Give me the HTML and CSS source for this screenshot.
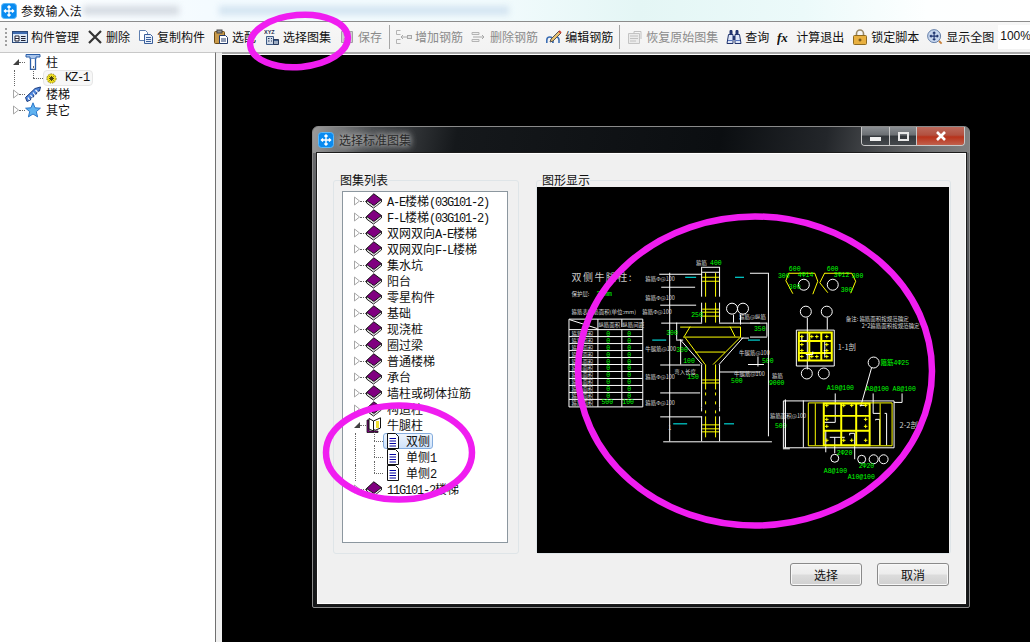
FILE: index.html
```html
<!DOCTYPE html>
<html lang="zh-CN">
<head>
<meta charset="utf-8">
<title>参数输入法</title>
<link rel="stylesheet" href="styles.css">
</head>
<body>
<svg class="defs" aria-hidden="true">
  <symbol id="app" viewBox="0 0 16 16"><rect x=".5" y=".5" width="15" height="15" rx="3" fill="#0a8bf0" stroke="#5ab8f8"/><path d="M8 3v10M4 8h9M6.4 4.6 8 3l1.6 1.6M6.4 11.4 8 13l1.6-1.6M5 6.4 3.4 8 5 9.6M11 6.4 12.6 8 11 9.6" fill="none" stroke="#fff" stroke-width="1.4"/></symbol>
  <symbol id="i-manage" viewBox="0 0 16 16"><rect x=".5" y="2.5" width="15" height="11" fill="#dce9f7" stroke="#2d4a78"/><rect x="1" y="3" width="14" height="2" fill="#3f6cb0"/><path d="M3 7h4v5H3zM3 9.5h4M9 7.5h4.500M9 9.500h4.500M9 11.500h4.500" fill="#fff" stroke="#223"/></symbol>
  <symbol id="i-x" viewBox="0 0 16 16"><path d="M2 2 14 14M14 2 2 14" stroke="#333" stroke-width="2.200" fill="none"/></symbol>
  <symbol id="i-copy" viewBox="0 0 16 16"><path d="M1.500 1.500h6l2 2v8h-8z" fill="#fff" stroke="#5f7fb0"/><path d="M6.500 5.500h6l2 2v7h-8z" fill="#e8f0fb" stroke="#3b5f9a"/><path d="M8 8.500h5M8 10.500h5M8 12.500h5" stroke="#3b5f9a"/></symbol>
  <symbol id="i-paste" viewBox="0 0 16 16"><rect x="1.500" y="2.500" width="10" height="12" rx="1" fill="#c99a4a" stroke="#6b4b15"/><rect x="4" y="1" width="5" height="3" fill="#8e8e8e" stroke="#444"/><path d="M6.500 6.500h6l2 2v6h-8z" fill="#fff" stroke="#223a6a"/><path d="M8 10h5M8 12h5" stroke="#223a6a"/></symbol>
  <symbol id="i-save" viewBox="0 0 16 16"><path d="M2.500 2.500h11v11h-11z" fill="#cfcfcf" stroke="#a2a2a2"/><path d="M5 2.500h6v4H5zM5 9.500h6v4H5z" fill="#efefef" stroke="#b0b0b0"/></symbol>
  <symbol id="i-add" viewBox="0 0 16 16"><path d="M4.500 1.500H.5v4h4M4.500 10.500H.5v4h4" fill="none" stroke="#b4b4b4"/><path d="M5 8h6M7 6 5 8l2 2" fill="none" stroke="#a8a8a8"/><rect x="11.500" y="6.500" width="4" height="3" fill="#e4e4e4" stroke="#a8a8a8"/></symbol>
  <symbol id="i-del" viewBox="0 0 16 16"><path d="M1 3.500h7v2H1zM1 10.500h7v2H1z" fill="#eee" stroke="#b4b4b4"/><path d="M2 8h11M11 6l2 2-2 2" fill="none" stroke="#a8a8a8"/></symbol>
  <symbol id="i-edit" viewBox="0 0 16 16"><path d="M.8 14v-3q0-3 3-3t3 3v3M7 14v-3q0-3 3-3t3 3v3" fill="none" stroke="#3c6eb4" stroke-width="1.600"/><path d="M5 10 13 2l2 2-8 8-3 1z" fill="#e8c070" stroke="#555"/><path d="M13 2l2 2" stroke="#d04030" stroke-width="1.800"/></symbol>
  <symbol id="i-restore" viewBox="0 0 16 16"><path d="M1.500 4.500h11v10h-11z" fill="#ebebeb" stroke="#c4c4c4"/><path d="M3 7h8M3 9.500h8M3 12h6M7 5V2.500h7V10" fill="none" stroke="#c0c0c0"/></symbol>
  <symbol id="i-binoc" viewBox="0 0 16 16"><path d="M4 1.500h2v4H4zM10 1.500h2v4h-2z" fill="#23356e" stroke="#23356e"/><path d="M2.500 5.500h4.500v9H1z M9 5.500h4.500L15 14.500H9z" fill="#dfe7f7" stroke="#23356e"/><path d="M7 7h2v4H7z" fill="#23356e"/><path d="M2 11.500h4.500M9.500 11.500H14" stroke="#5a78c0"/></symbol>
  <symbol id="i-lock" viewBox="0 0 16 16"><path d="M4.500 7V4.500a3.500 3.500 0 0 1 7 0V7" fill="none" stroke="#9a8a68" stroke-width="1.600"/><rect x="1.500" y="6.500" width="13" height="9" rx="1" fill="#e8b040" stroke="#8e6a20"/><path d="M8 9.500v3M6.500 11h3" stroke="#5a4010"/></symbol>
  <symbol id="i-zoom" viewBox="0 0 18 18"><circle cx="8" cy="8" r="7.300" fill="#c6d6ee" stroke="#55719e"/><path d="M8 3.500v9M3.500 8h9M6.500 5 8 3.500 9.500 5M6.500 11 8 12.500 9.500 11M5 6.500 3.500 8 5 9.500M11 6.500 12.500 8 11 9.500" fill="none" stroke="#1f3570" stroke-width="1.200"/><path d="m13.500 13.500 3 3" stroke="#c8803a" stroke-width="2"/></symbol>
  <symbol id="t-col" viewBox="0 0 16 16"><path d="M1 .5h14v2.500H11v2h-6V3H1z" fill="#a8c4ea" stroke="#2a5ea8"/><path d="M5.500 5v10.500h5V5" fill="#fff" stroke="#2a5ea8" stroke-width="1.300"/></symbol>
  <symbol id="t-stair" viewBox="0 0 16 16"><path d="M.5 11.500 10 2.500l5.500-1.500-1 4-2.500.5-.5 2.500-2.500.5-.5 2.500-2.500.5-.5 2.500L2 15.500z" fill="#4f86dc" stroke="#1e3f80"/><path d="M3 11.500l1.500 2.500M5.500 9l2 2.500M8 6.500l2 2.500M10.500 4l2 2" stroke="#fff" stroke-width="1.200"/></symbol>
  <symbol id="t-star" viewBox="0 0 16 16"><path d="m8 .8 2 5 5.400.4-4.100 3.400 1.300 5.300L8 12l-4.600 2.900 1.300-5.300L.6 6.200 6 5.800z" fill="#5fb2f0" stroke="#2a76c8"/></symbol>
  <symbol id="t-gear" viewBox="0 0 11 11"><circle cx="5.500" cy="5.500" r="4.600" fill="#f0e020" stroke="#8a7a10" stroke-dasharray="1.500 1"/><path d="M3 5.500h5M5.500 3v5M3.500 3.500l4 4M7.500 3.500l-4 4" stroke="#4a4410"/></symbol>
  <symbol id="book" viewBox="0 0 16 16"><path d="M.6 7.500v2.500L7.500 15l7.900-6V6.500z" fill="#fff" stroke="#111"/><path d="M.6 7.500 7.800 .8l7.600 5.700-7.500 6z" fill="#800080" stroke="#111"/><path d="M8.500 13.800l6-4.500M8 13.500 1.500 9" stroke="#aaa" stroke-width=".7"/></symbol>
  <symbol id="book-open" viewBox="0 0 16 16"><path d="M1 3h2v11h9v1.500H1z" fill="#800080" stroke="#111" stroke-width=".8"/><path d="M3 1.500 7.500 4v10L3 12z" fill="#fff" stroke="#111"/><path d="M7.500 4 14.500.8V11l-7 3z" fill="#fff" stroke="#111"/><path d="M10 4h3v7h-3z" fill="#f0e030"/></symbol>
  <symbol id="page" viewBox="0 0 12 16"><path d="M.5.500h8l3 3v12H.5z" fill="#fff" stroke="#111"/><path d="M2.500 5.500H9M2.500 8H9M2.500 10.500H9M2.500 13H9" stroke="#0000a0"/></symbol>
  <symbol id="tri" viewBox="0 0 6 10"><path d="M.5 1v8l5-4z" fill="#fff" stroke="#a6a6a6"/></symbol>
  <symbol id="tri-open" viewBox="0 0 6 10"><path d="M6 2v6H0z" fill="#404040"/></symbol>
  <symbol id="plus" viewBox="0 0 4 4"><path d="M2 0v4M0 2h4" stroke="#ff0" stroke-width="1"/></symbol>
</svg>

<header class="appbar">
  <svg class="app-ic"><use href="#app"/></svg>
  <span class="app-name">参数输入法</span>
  <span class="blob b1"></span><span class="blob b3"></span>
</header>

<nav class="toolbar">
  <span class="grip"></span>
  <div class="tool"><svg class="ti"><use href="#i-manage"/></svg><span>构件管理</span></div>
  <div class="tool"><svg class="ti"><use href="#i-x"/></svg><span>删除</span></div>
  <div class="tool"><svg class="ti"><use href="#i-copy"/></svg><span>复制构件</span></div>
  <div class="tool"><svg class="ti"><use href="#i-paste"/></svg><span>选配</span></div>
  <div class="tool"><svg class="ti" viewBox="0 0 16 16"><text x="0" y="5" class="mini">XYZ</text><path d="M2.500 7.500h7v8h-7z" fill="#cfd8e6" stroke="#3c5a86"/><path d="M9.500 10.500h5v5h-5z" fill="#3c5a86" stroke="#26395c"/><path d="M4 9.500h1.500M7 9.500h1M4 12h1.500M7 12h1" stroke="#26395c"/><path d="M11 12v3M13 12v3" stroke="#fff"/></svg><span>选择图集</span></div>
  <div class="tool off"><svg class="ti"><use href="#i-save"/></svg><span>保存</span></div>
  <i class="sep s1"></i>
  <div class="tool off"><svg class="ti"><use href="#i-add"/></svg><span>增加钢筋</span></div>
  <div class="tool off"><svg class="ti"><use href="#i-del"/></svg><span>删除钢筋</span></div>
  <div class="tool"><svg class="ti"><use href="#i-edit"/></svg><span>编辑钢筋</span></div>
  <i class="sep s2"></i>
  <div class="tool off"><svg class="ti"><use href="#i-restore"/></svg><span>恢复原始图集</span></div>
  <div class="tool"><svg class="ti"><use href="#i-binoc"/></svg><span>查询</span></div>
  <div class="tool"><svg class="ti" viewBox="0 0 16 16"><text x="0" y="13" class="fx">fx</text></svg><span>计算退出</span></div>
  <div class="tool"><svg class="ti"><use href="#i-lock"/></svg><span>锁定脚本</span></div>
  <div class="tool"><svg class="ti"><use href="#i-zoom"/></svg><span>显示全图</span></div>
  <div class="zoombox">100%</div>
</nav>

<main class="main">
  <aside class="panel">
    <div class="row"><svg class="tw"><use href="#tri-open"/></svg><i class="dots"></i><svg class="ic"><use href="#t-col"/></svg><span>柱</span></div>
    <div class="row child"><i class="conn"></i><div class="pill"><svg class="gear"><use href="#t-gear"/></svg><span class="l">KZ-1</span></div></div>
    <div class="row"><svg class="tw"><use href="#tri"/></svg><i class="dots"></i><svg class="ic"><use href="#t-stair"/></svg><span>楼梯</span></div>
    <div class="row"><svg class="tw"><use href="#tri"/></svg><i class="dots"></i><svg class="ic"><use href="#t-star"/></svg><span>其它</span></div>
  </aside>
  <div class="splitter"></div>
  <div class="canvas"></div>
</main>

<section class="dialog">
  <div class="dlg-title">
    <svg class="dlg-ic"><use href="#app"/></svg>
    <span class="dlg-name">选择标准图集</span>
    <div class="ctrls">
      <div class="ctrl c-min"><i class="g-min"></i></div>
      <div class="ctrl c-max"><i class="g-max"></i></div>
      <div class="ctrl c-close"><svg class="g-close" viewBox="0 0 12 10"><path d="M2 1l8 8M10 1 2 9" stroke="#fff" stroke-width="2.600"/></svg></div>
    </div>
  </div>
  <div class="client">
    <div class="dlg-body">
      <fieldset class="group g-list">
        <legend>图集列表</legend>
        <div class="tree">
          <div class="row"><svg class="tw"><use href="#tri"/></svg><i class="dots"></i><svg class="ic"><use href="#book"/></svg><span><span class="l">A-E</span>楼梯<span class="l">(03G101-2)</span></span></div>
          <div class="row"><svg class="tw"><use href="#tri"/></svg><i class="dots"></i><svg class="ic"><use href="#book"/></svg><span><span class="l">F-L</span>楼梯<span class="l">(03G101-2)</span></span></div>
          <div class="row"><svg class="tw"><use href="#tri"/></svg><i class="dots"></i><svg class="ic"><use href="#book"/></svg><span>双网双向<span class="l">A-E</span>楼梯</span></div>
          <div class="row"><svg class="tw"><use href="#tri"/></svg><i class="dots"></i><svg class="ic"><use href="#book"/></svg><span>双网双向<span class="l">F-L</span>楼梯</span></div>
          <div class="row"><svg class="tw"><use href="#tri"/></svg><i class="dots"></i><svg class="ic"><use href="#book"/></svg><span>集水坑</span></div>
          <div class="row"><svg class="tw"><use href="#tri"/></svg><i class="dots"></i><svg class="ic"><use href="#book"/></svg><span>阳台</span></div>
          <div class="row"><svg class="tw"><use href="#tri"/></svg><i class="dots"></i><svg class="ic"><use href="#book"/></svg><span>零星构件</span></div>
          <div class="row"><svg class="tw"><use href="#tri"/></svg><i class="dots"></i><svg class="ic"><use href="#book"/></svg><span>基础</span></div>
          <div class="row"><svg class="tw"><use href="#tri"/></svg><i class="dots"></i><svg class="ic"><use href="#book"/></svg><span>现浇桩</span></div>
          <div class="row"><svg class="tw"><use href="#tri"/></svg><i class="dots"></i><svg class="ic"><use href="#book"/></svg><span>圈过梁</span></div>
          <div class="row"><svg class="tw"><use href="#tri"/></svg><i class="dots"></i><svg class="ic"><use href="#book"/></svg><span>普通楼梯</span></div>
          <div class="row"><svg class="tw"><use href="#tri"/></svg><i class="dots"></i><svg class="ic"><use href="#book"/></svg><span>承台</span></div>
          <div class="row"><svg class="tw"><use href="#tri"/></svg><i class="dots"></i><svg class="ic"><use href="#book"/></svg><span>墙柱或砌体拉筋</span></div>
          <div class="row"><svg class="tw"><use href="#tri"/></svg><i class="dots"></i><svg class="ic"><use href="#book"/></svg><span>构造柱</span></div>
          <div class="row"><svg class="tw"><use href="#tri-open"/></svg><i class="dots"></i><svg class="ic"><use href="#book-open"/></svg><span>牛腿柱</span></div>
          <div class="row child"><i class="conn"></i><div class="pill sel"><svg class="pg"><use href="#page"/></svg><span>双侧</span></div></div>
          <div class="row child"><i class="conn"></i><div class="pill"><svg class="pg"><use href="#page"/></svg><span>单侧<span class="l">1</span></span></div></div>
          <div class="row child"><i class="conn"></i><div class="pill"><svg class="pg"><use href="#page"/></svg><span>单侧<span class="l">2</span></span></div></div>
          <div class="row"><svg class="tw"><use href="#tri"/></svg><i class="dots"></i><svg class="ic"><use href="#book"/></svg><span><span class="l">11G101-2</span>楼梯</span></div>
        </div>
      </fieldset>
      <fieldset class="group g-draw">
        <legend>图形显示</legend>
        <svg class="drawing" viewBox="537 187 412 367">
          <text x="571" y="281" class="t-title">双侧牛腿柱:</text>
          <text x="571" y="296" class="t">保护层:</text><text x="596" y="296" class="n">30mm</text>
          <text x="571" y="314" class="t">箍筋表纵筋面积(单位:mm)</text>
          <path class="w" d="M568.500 319.500h74v88h-74zM597.500 319.500v88M621.500 319.500v8M621.500 330v77.500M568.500 330h74M568.500 337h74M568.500 344h74M568.500 351h74M568.500 358h74M568.500 365h74M568.500 372h74M568.500 379h74M568.500 386h74M568.500 393h74M568.500 400h74M569 320l28 9"/>
          <g class="t">
            <text x="598" y="327">纵筋面积</text><text x="622" y="327">纵筋间距</text>
            <text x="571" y="336">箍筋面积</text><text x="571" y="343">箍筋面积</text><text x="571" y="350">箍筋面积</text><text x="571" y="357">箍筋面积</text><text x="571" y="364">箍筋面积</text><text x="571" y="371">箍筋面积</text><text x="571" y="378">箍筋面积</text><text x="571" y="385">箍筋面积</text><text x="571" y="392">箍筋面积</text><text x="571" y="399">箍筋面积</text><text x="571" y="406">箍筋面积</text>
          </g>
          <g class="n">
            <text x="606" y="336">0</text><text x="627" y="336">0</text><text x="606" y="343">0</text><text x="627" y="343">0</text><text x="606" y="350">0</text><text x="627" y="350">0</text><text x="606" y="357">0</text><text x="627" y="357">0</text><text x="606" y="364">0</text><text x="627" y="364">0</text><text x="606" y="371">0</text><text x="627" y="371">0</text><text x="606" y="378">0</text><text x="627" y="378">0</text><text x="606" y="385">0</text><text x="627" y="385">0</text><text x="606" y="392">0</text><text x="627" y="392">0</text><text x="606" y="399">0</text><text x="627" y="399">0</text>
            <text x="601" y="405">500</text><text x="622" y="405">100</text>
          </g>

          <path class="w" d="M669.500 273v169M659 274.500h43M661 287.500h34M660 305.500h36M661 323.500h41M660 365.500h40M660 393.500h40M660 417.500h42M663 442.500h109"/>
          <path class="w" d="M701.500 267v30M719.500 267v30M701.500 303v20M719.500 303v20M702 267.500h17M702 272.500h17M701.500 365v43M719.500 365v43M701.500 417v25M719.500 417v25"/>
          <path class="wd" d="M701.500 408v9M719.500 408v9"/>
          <path class="y" d="M705.500 273v24M715.500 273v24M702 277.500h17M702 281.500h17M705.500 303v20M715.500 303v20M702 309.500h17M702 312.500h17M702 316.500h17M705.500 365v25M715.500 365v25M702 380.500h17M702 383.500h17M705.500 417v21M715.500 417v21M702 425.500h17M702 429.500h17M702 432.500h17"/>
          <path class="yd" d="M705.500 393v24M715.500 393v24"/>
          <path class="w" d="M719 323.500h41M676.500 323v17M680.500 340v25M680 340l22 25M743 338l-24 27M719 372.500h41M676 340.500h7M741 338.500h8"/>
          <path class="y" d="M680 327.500h60M683 337.500h57M695 352.500h30M685 338l20 27M740 338l-27 27M690 327l-6 10M730 327l5 10M740.500 327v11"/>
          <path class="c" d="M685 277.500h11M735 277.500h9M652 340.500h14M748 340.500h12M673 424.500h14M724 424.500h10"/>
          <g class="n">
            <text x="710" y="265">400</text><text x="691" y="317">250</text><text x="666" y="335">300</text><text x="676" y="352">300</text><text x="683" y="363">100</text><text x="687" y="380">150</text><text x="731" y="384">500</text>
            <text x="775" y="429">500</text><text x="754" y="331">350</text><text x="762" y="363">500</text><text x="769" y="386">9000</text>
          </g>
          <g class="t">
            <text x="645" y="281">箍筋Φ@100</text><text x="645" y="300">箍筋Φ@100</text><text x="642" y="314">箍筋Φ@100</text><text x="645" y="351">牛腿筋@100</text><text x="645" y="380">箍筋Φ@100</text><text x="674" y="375">弯入长度</text><text x="645" y="406">箍筋Φ@100</text>
            <text x="696" y="265">箍筋</text><text x="739" y="319">箍筋@纵筋</text><text x="739" y="355">牛腿筋@100</text><text x="734" y="377">牛腿筋@100</text><text x="772" y="379">箍筋</text><text x="770" y="419">箍筋面积@100</text>
            <text x="846" y="321">备注: 箍筋面积按规范确定</text><text x="862" y="328">2*2箍筋面积按规范确定</text>
            <text x="668" y="431">1</text>
          </g>
          <g class="circles">
            <circle cx="732" cy="309" r="5.500"/><circle cx="743" cy="309" r="5.500"/><circle cx="804" cy="285" r="5.500"/><circle cx="833" cy="285" r="5.500"/><circle cx="806" cy="312" r="5.500"/><circle cx="827" cy="312" r="5.500"/><circle cx="807" cy="374" r="5.500"/><circle cx="824" cy="374" r="5.500"/><circle cx="874" cy="363" r="5.500"/><circle cx="835" cy="459" r="4"/><circle cx="862" cy="460" r="4"/><circle cx="874" cy="460" r="4.500"/><circle cx="884" cy="460" r="4.500"/>
          </g>
          <path class="w" d="M733.500 315v8M740.500 315v10M750 273.500h18M768.500 273v164M750 323.500h17M750 337.500h17M767 323v14M748 365h14M758 357v10M764 365h-4M785.500 400v49M783 449.500h7M807.500 318v52M827.500 318v12M872 368l-11 39"/>
          <path class="y" d="M789 273.500h26l3 8-5 13M789 273l-3 8 7 13M825 273.500h27l4 8-5 12M825 273l-5 10 8 10"/>
          <g class="n">
            <text x="789" y="271">600</text><text x="827" y="271">600</text><text x="778" y="278">300</text><text x="852" y="278">300</text><text x="789" y="289">300</text><text x="841" y="292">300</text><text x="798" y="277">4Φ14</text><text x="834" y="277">3Φ12</text>
            <text x="881" y="365">箍筋4Φ25</text><text x="827" y="391">A10@100</text><text x="866" y="392">A8@100</text><text x="893" y="392">A8@100</text><text x="837" y="456">2Φ20</text><text x="859" y="469">2Φ20</text><text x="824" y="474">A8@100</text><text x="848" y="480">A10@100</text>
          </g>
          <path class="w" d="M796.500 330.500h38v36h-38z"/>
          <path class="yy" d="M799 333h33v28h-33zM809.500 333v28M821.500 333v28M799 341.500h33M799 353.500h33"/>
          <path class="w" d="M802 336v5h5M806 355h7v-3M825 358v-16M824 351h3"/>
          <g class="t-big"><text x="838" y="350">1-1剖</text><text x="900" y="429">2-2剖</text></g>
          <path class="w" d="M783.500 401.500h111v47h-111zM803.500 401v47M785.500 401v47M835.500 394v29h-11M873.500 394v20h7M902.500 394v9h-8M860 406h6M876 421v-1h4v26M885 414h2v32M830 438h15M835 438v16M850 436v-2h5v26M826 431v22"/>
          <path class="y" d="M808.500 403.500h84v43h-84zM815.500 404v42M880.500 404v42"/>
          <path class="yy" d="M824 404h46v42h-46zM841.500 404v42M856.500 404v42M824 416.500h46M824 431.500h46"/>
          <g class="plus">
            <use href="#plus" x="800" y="335" width="4" height="4"/><use href="#plus" x="810" y="335" width="4" height="4"/><use href="#plus" x="815" y="335" width="4" height="4"/><use href="#plus" x="825" y="335" width="4" height="4"/><use href="#plus" x="800" y="343" width="4" height="4"/><use href="#plus" x="825" y="343" width="4" height="4"/><use href="#plus" x="800" y="349" width="4" height="4"/><use href="#plus" x="825" y="349" width="4" height="4"/><use href="#plus" x="800" y="355" width="4" height="4"/><use href="#plus" x="810" y="355" width="4" height="4"/><use href="#plus" x="815" y="355" width="4" height="4"/><use href="#plus" x="825" y="355" width="4" height="4"/>
            <use href="#plus" x="825" y="404" width="4" height="4"/><use href="#plus" x="842" y="404" width="4" height="4"/><use href="#plus" x="850" y="404" width="4" height="4"/><use href="#plus" x="864" y="404" width="4" height="4"/><use href="#plus" x="825" y="418" width="4" height="4"/><use href="#plus" x="864" y="418" width="4" height="4"/><use href="#plus" x="825" y="425" width="4" height="4"/><use href="#plus" x="864" y="425" width="4" height="4"/><use href="#plus" x="825" y="439" width="4" height="4"/><use href="#plus" x="842" y="439" width="4" height="4"/><use href="#plus" x="850" y="439" width="4" height="4"/><use href="#plus" x="864" y="439" width="4" height="4"/>
          </g>
        </svg>
      </fieldset>
    </div>
    <div class="dlg-foot">
      <button class="btn">选择</button>
      <button class="btn">取消</button>
    </div>
  </div>
</section>

<svg class="marks" viewBox="0 0 1030 642" aria-hidden="true">
  <ellipse cx="299" cy="41" rx="49" ry="26" transform="rotate(-5 299 41)"/>
  <ellipse cx="399" cy="452.500" rx="73" ry="47"/>
  <ellipse cx="755" cy="371" rx="177" ry="154.500"/>
</svg>
</body>
</html>
```

FILE: styles.css
```css
* { box-sizing: border-box; }
html, body { margin: 0; height: 642px; overflow: hidden; }
body {
  position: relative;
  width: 1030px;
  display: flex;
  flex-direction: column;
  font: 12px/16px "Noto Sans CJK SC", "Liberation Sans", sans-serif;
  color: #111;
  background: #fff;
}
.defs { position: absolute; width: 0; height: 0; }
.mini { font: bold 5.5px "Liberation Sans", sans-serif; fill: #1d2d50; }
.fx { font: italic bold 13px "Liberation Serif", serif; fill: #111; }

/* app title bar */
.appbar {
  height: 22px;
  flex: none;
  display: flex;
  align-items: center;
  padding-left: 1px;
  overflow: hidden;
  border-bottom: 1px solid #8c8c8c;
  background: linear-gradient(90deg, #fff 0, #f4fbff 20%, #f2fbfd 48%, #e4f6f5 62%, #ecfafa 78%, #fdffff 90%, #fff 100%);
}
.app-ic { width: 16px; height: 16px; margin-right: 4px; flex: none; }
.app-name { flex: none; width: 62px; white-space: nowrap; letter-spacing: .2px; }
.blob { flex: none; height: 9px; filter: blur(3px); }
.b1 { width: 96px; background: #d4dae2; }
.b3 { width: 290px; margin-left: 40px; background: #d3e4f1; }

/* toolbar */
.toolbar {
  height: 30px;
  flex: none;
  display: flex;
  align-items: center;
  padding-left: 5px;
  background: linear-gradient(#f7f7f7, #f2f2f2);
  white-space: nowrap;
}
.grip { width: 3px; height: 18px; margin-right: 5px; border-left: 2px dotted #a0a0a0; }
.tool { display: flex; align-items: center; gap: 3px; padding-right: 8px; }
.ti { width: 16px; height: 16px; flex: none; }
.off { color: #8b8b8b; }
.sep { width: 1px; height: 24px; background: #a6a6a6; flex: none; }
.s1 { margin: 0 6px 0 -1px; }
.s2 { margin: 0 7px 0 -2px; }
.zoombox { flex: 1; height: 24px; margin-left: -4px; padding-left: 2px; background: #fff; line-height: 22px; font-family: "Liberation Sans", sans-serif; }

/* main area */
.main { flex: 1; display: flex; min-height: 0; }
.panel { width: 216px; flex: none; padding: 1px 0 0 13px; background: #fff; border-right: 1px solid #707070; border-top: 1px solid #c8c8c8; }
.splitter { width: 6px; flex: none; background: #f0f0f0; border-top: 1px solid #c8c8c8; }
.canvas { flex: 1; background: #000; border-top: 2px solid #a8a8a8; box-shadow: inset 0 1px 0 #fff; }

/* trees */
.row { position: relative; height: 16px; display: flex; align-items: center; white-space: nowrap; }
.tw { width: 6px; height: 10px; flex: none; }
.dots { width: 6px; flex: none; border-top: 1px dotted #666; }
.ic { width: 16px; height: 16px; flex: none; margin-right: 5px; }
.l { font: 12px "Liberation Mono", monospace; letter-spacing: -1.2px; }
.child { padding-left: 20px; }
.child::before { content: ""; position: absolute; left: 20px; top: -4px; height: 12px; border-left: 1px dotted #666; }
.child::after { content: ""; position: absolute; left: 1px; top: 0; bottom: 0; border-left: 1px dotted #666; }
.conn { width: 9px; flex: none; border-top: 1px dotted #666; }
.pill { height: 16px; display: flex; align-items: center; gap: 7px; padding: 0 4px 0 3px; border: 1px solid transparent; border-radius: 3px; }
.pg { width: 12px; height: 16px; flex: none; }
.sel { width: 50px; border-color: #84acdd; background: linear-gradient(#eef5fd, #cfe3fb); }
.panel .conn { width: 10px; }
.panel .pill { padding: 0 3px 0 2px; gap: 8px; border-color: #e6e6e6; background: #f7f7f7; border-radius: 4px; }
.gear { width: 11px; height: 11px; flex: none; }

/* dialog */
.dialog {
  position: absolute;
  left: 312px;
  top: 126px;
  width: 658px;
  height: 482px;
  display: flex;
  flex-direction: column;
  border: 1px solid #8a8a8a;
  border-radius: 6px 6px 2px 2px;
  background: linear-gradient(#6f7072 0, #44464a 40%, #1c1e20 75%, #141618 100%);
}
.dlg-title {
  height: 26px;
  flex: none;
  display: flex;
  align-items: flex-start;
  padding-left: 5px;
  border-radius: 5px 5px 0 0;
  background: linear-gradient(100deg, #9b9b9b 0, #4a4d50 9%, #15181b 22%, #0b0e11 62%, #23262a 78%, #6e7072 94%, #808080 100%);
}
.dlg-ic { width: 16px; height: 16px; margin: 5px 5px 0 0; flex: none; }
.dlg-name { margin-top: 5px; color: #2a2a2a; text-shadow: 0 0 7px #c8c8c8, 0 0 7px #c8c8c8; }
.ctrls { margin-left: auto; margin-right: 4px; height: 19px; display: flex; border: 1px solid #c8c8c8; border-top: 0; border-radius: 0 0 4px 4px; overflow: hidden; }
.ctrl { display: flex; align-items: center; justify-content: center; background: linear-gradient(#8a8e92 0, #6a6e72 45%, #33373b 50%, #44484c 100%); }
.c-min { width: 28px; border-right: 1px solid #c8c8c8; }
.c-max { width: 27px; border-right: 1px solid #c8c8c8; }
.c-close { width: 47px; background: linear-gradient(#bc6a5c 0, #b2503f 45%, #b8321a 55%, #c0604c 100%); }
.g-min { width: 11px; height: 4px; margin-top: 5px; background: #f0f0f0; }
.g-max { width: 11px; height: 9px; border: 2px solid #e8e8e8; }
.g-close { width: 12px; height: 10px; }
.client {
  flex: 1;
  margin: 0 3px 3px 4px;
  display: flex;
  flex-direction: column;
  background: #f0f0f0;
  border: 1px solid #fff;
  box-shadow: 0 0 0 1px #1c1c1c;
}
.dlg-body { display: flex; gap: 17px; padding: 19px 0 0 15px; }
.group { height: 381px; margin: 0; padding: 0; min-width: 0; border: 1px solid #dfe5e8; border-radius: 3px; background: #f0f0f0; }
.group legend { padding: 0; line-height: 14px; }
.g-list { width: 186px; }
.g-list legend { margin-left: 6px; }
.g-draw { width: 415px; }
.g-draw legend { margin-left: 5px; }
.tree { width: 166px; height: 352px; margin: 4px 0 0 8px; padding: 1px 0 0 11px; background: #fff; border: 1px solid #8c979f; }
.drawing { display: block; width: 412px; height: 366px; background: #000; }
.dlg-foot { display: flex; justify-content: flex-end; gap: 15px; padding: 9px 16px 0 0; }
.btn {
  width: 72px;
  height: 23px;
  padding: 0;
  font: 12px "Noto Sans CJK SC", sans-serif;
  color: #111;
  border: 1px solid #8a8a8a;
  border-radius: 3px;
  background: linear-gradient(#f4f4f4 0, #ececec 48%, #dcdcdc 52%, #d0d0d0 100%);
  box-shadow: inset 0 0 0 1px #f8f8f8;
}

/* CAD drawing */
.w { fill: none; stroke: #fff; stroke-width: 1; }
.wd { fill: none; stroke: #fff; stroke-width: 1; stroke-dasharray: 4 5; }
.y { fill: none; stroke: #ff0; stroke-width: 1; }
.yd { fill: none; stroke: #ff0; stroke-width: 1; stroke-dasharray: 3 6; }
.yy { fill: none; stroke: #ff0; stroke-width: 2; }
.c { fill: none; stroke: #0ff; stroke-width: 1; }
.circles { fill: none; stroke: #fff; stroke-width: 1; }
.t, .t text { font: 5.500px "Noto Sans CJK SC", sans-serif; fill: #d8d8d8; }
.t-title { font: 10px "Noto Sans CJK SC", sans-serif; fill: #c8c8c8; letter-spacing: 1.500px; }
.t-big text { font: 7.500px "Noto Sans CJK SC", sans-serif; fill: #d0d0d0; }
.n, .n text { font: 6.500px "Liberation Mono", "Noto Sans CJK SC", monospace; fill: #0f0; }

/* hand-drawn annotation rings */
.marks { position: absolute; left: 0; top: 0; width: 1030px; height: 642px; pointer-events: none; }
.marks ellipse { fill: none; stroke: #f01df0; stroke-width: 6.500; }
```
